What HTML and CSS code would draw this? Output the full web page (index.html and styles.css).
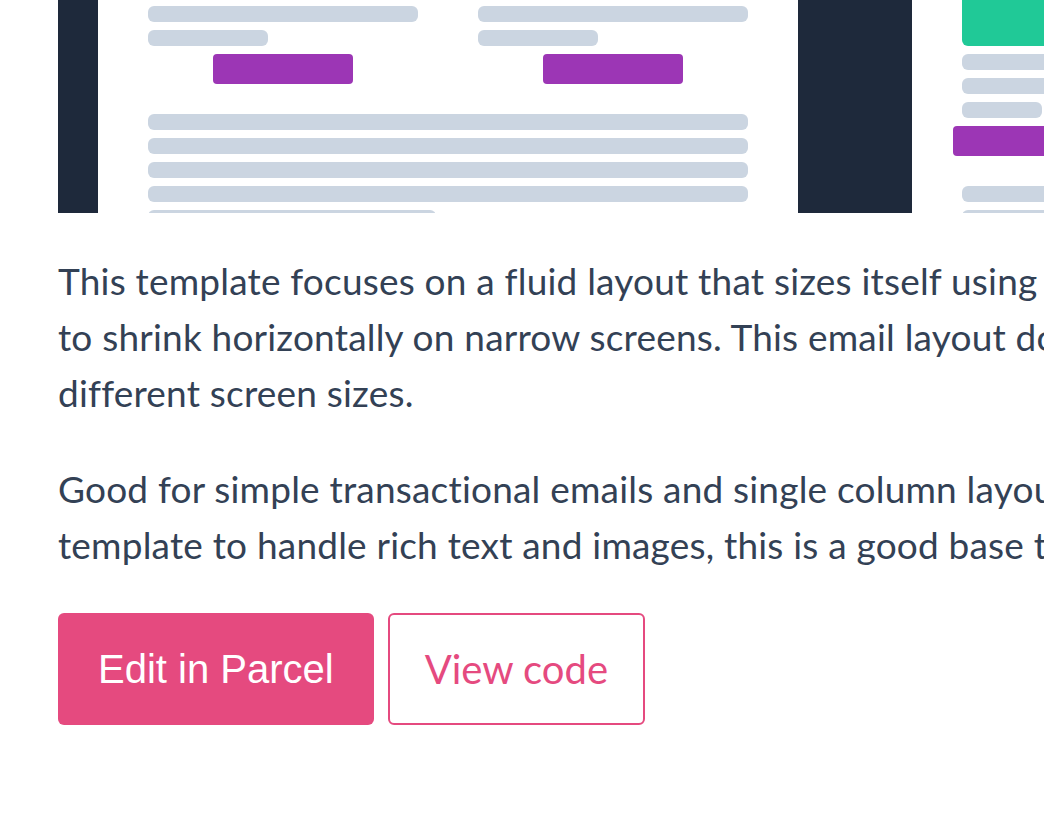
FILE: index.html
```html
<!DOCTYPE html>
<html lang="en">
<head>
  <meta charset="UTF-8" />
  <meta name="viewport" content="width=device-width, initial-scale=1.0"/>
  <title>Fluid layout template</title>
  <link rel="stylesheet" href="styles.css">
</head>
<body>

  <div class="template">

    <!-- Preview: desktop + mobile -->
    <div class="preview">
      <div class="desktop">
        <div class="email">
          <div class="columns">
            <div class="col">
              <span class="line"></span>
              <span class="line short"></span>
              <span class="cta"></span>
            </div>
            <div class="col">
              <span class="line"></span>
              <span class="line short"></span>
              <span class="cta"></span>
            </div>
          </div>
          <div class="body-lines">
            <span class="line"></span>
            <span class="line"></span>
            <span class="line"></span>
            <span class="line"></span>
            <span class="line last"></span>
          </div>
        </div>
      </div>

      <div class="mobile">
        <div class="hero"></div>
        <span class="line"></span>
        <span class="line"></span>
        <span class="line tiny"></span>
        <span class="cta wide"></span>
        <div class="body-lines">
          <span class="line"></span>
          <span class="line"></span>
        </div>
      </div>
    </div>

    <!-- Description -->
    <div class="desc">
      <p>This template focuses on a fluid layout that sizes itself using percentages, allowing it<br>
        to shrink horizontally on narrow screens. This email layout doesn't need media queries for<br>
        different screen sizes.</p>
      <p>Good for simple transactional emails and single column layouts. If you need a more complex<br>
        template to handle rich text and images, this is a good base to start from.</p>
    </div>

    <div class="actions">
      <a href="#" class="btn btn-primary">Edit in Parcel</a>
      <a href="#" class="btn btn-outline">View code</a>
    </div>

  </div>

</body>
</html>
```

FILE: styles.css
```css
* { margin: 0; padding: 0; box-sizing: border-box; }

html, body {
  height: 100%;
  overflow: hidden;
  background: #fff;
}

body {
  font-family: 'Lato', 'Open Sans', sans-serif;
  color: #334155;
}

.template {
  width: 1800px;
  padding-left: 58px;
}

/* preview image */
.preview {
  display: flex;
  height: 213px;
  overflow: hidden;
}

.desktop {
  background: #1e293b;
  padding: 0 114px 0 40px;
}

.email {
  width: 700px;
  height: 100%;
  background: #fff;
  padding: 6px 50px 0;
}

.columns {
  display: flex;
  gap: 60px;
}

.col {
  width: 270px;
  display: flex;
  flex-direction: column;
  align-items: flex-start;
  gap: 8px;
}

.line {
  display: block;
  flex-shrink: 0;
  width: 100%;
  height: 16px;
  background: #cbd5e1;
  border-radius: 6px;
}

.line.short { width: 120px; }
.line.last { width: 288px; }
.line.tiny { width: 80px; }

.cta {
  display: block;
  flex-shrink: 0;
  width: 140px;
  height: 30px;
  background: #9c36b5;
  border-radius: 4px;
  align-self: center;
}

.body-lines {
  display: flex;
  flex-direction: column;
  gap: 8px;
  margin-top: 30px;
}

.mobile {
  width: 400px;
  padding: 0 0 0 50px;
  display: flex;
  flex-direction: column;
  gap: 8px;
}

.hero {
  flex-shrink: 0;
  height: 56px;
  margin-top: -10px;
  background: #20c997;
  border-radius: 6px;
}

.cta.wide {
  width: auto;
  align-self: stretch;
  margin-left: -9px;
}

.mobile .body-lines { margin-top: 22px; }

/* text */
.desc {
  margin-top: 40px;
  white-space: nowrap;
}

.desc p {
  font-size: 37px;
  line-height: 56px;
  letter-spacing: 0.2px;
  margin-bottom: 40px;
}

.actions {
  display: flex;
  gap: 14px;
}

.btn {
  display: inline-flex;
  align-items: center;
  height: 112px;
  padding: 0 40px;
  font-size: 40px;
  border-radius: 6px;
  text-decoration: none;
}

.btn-primary {
  background: #e54a7f;
  color: #fff;
  font-family: 'Liberation Sans', Arial, sans-serif;
}

.btn-outline {
  border: 2px solid #e54a7f;
  color: #e54a7f;
  padding: 0 35px;
}
```
